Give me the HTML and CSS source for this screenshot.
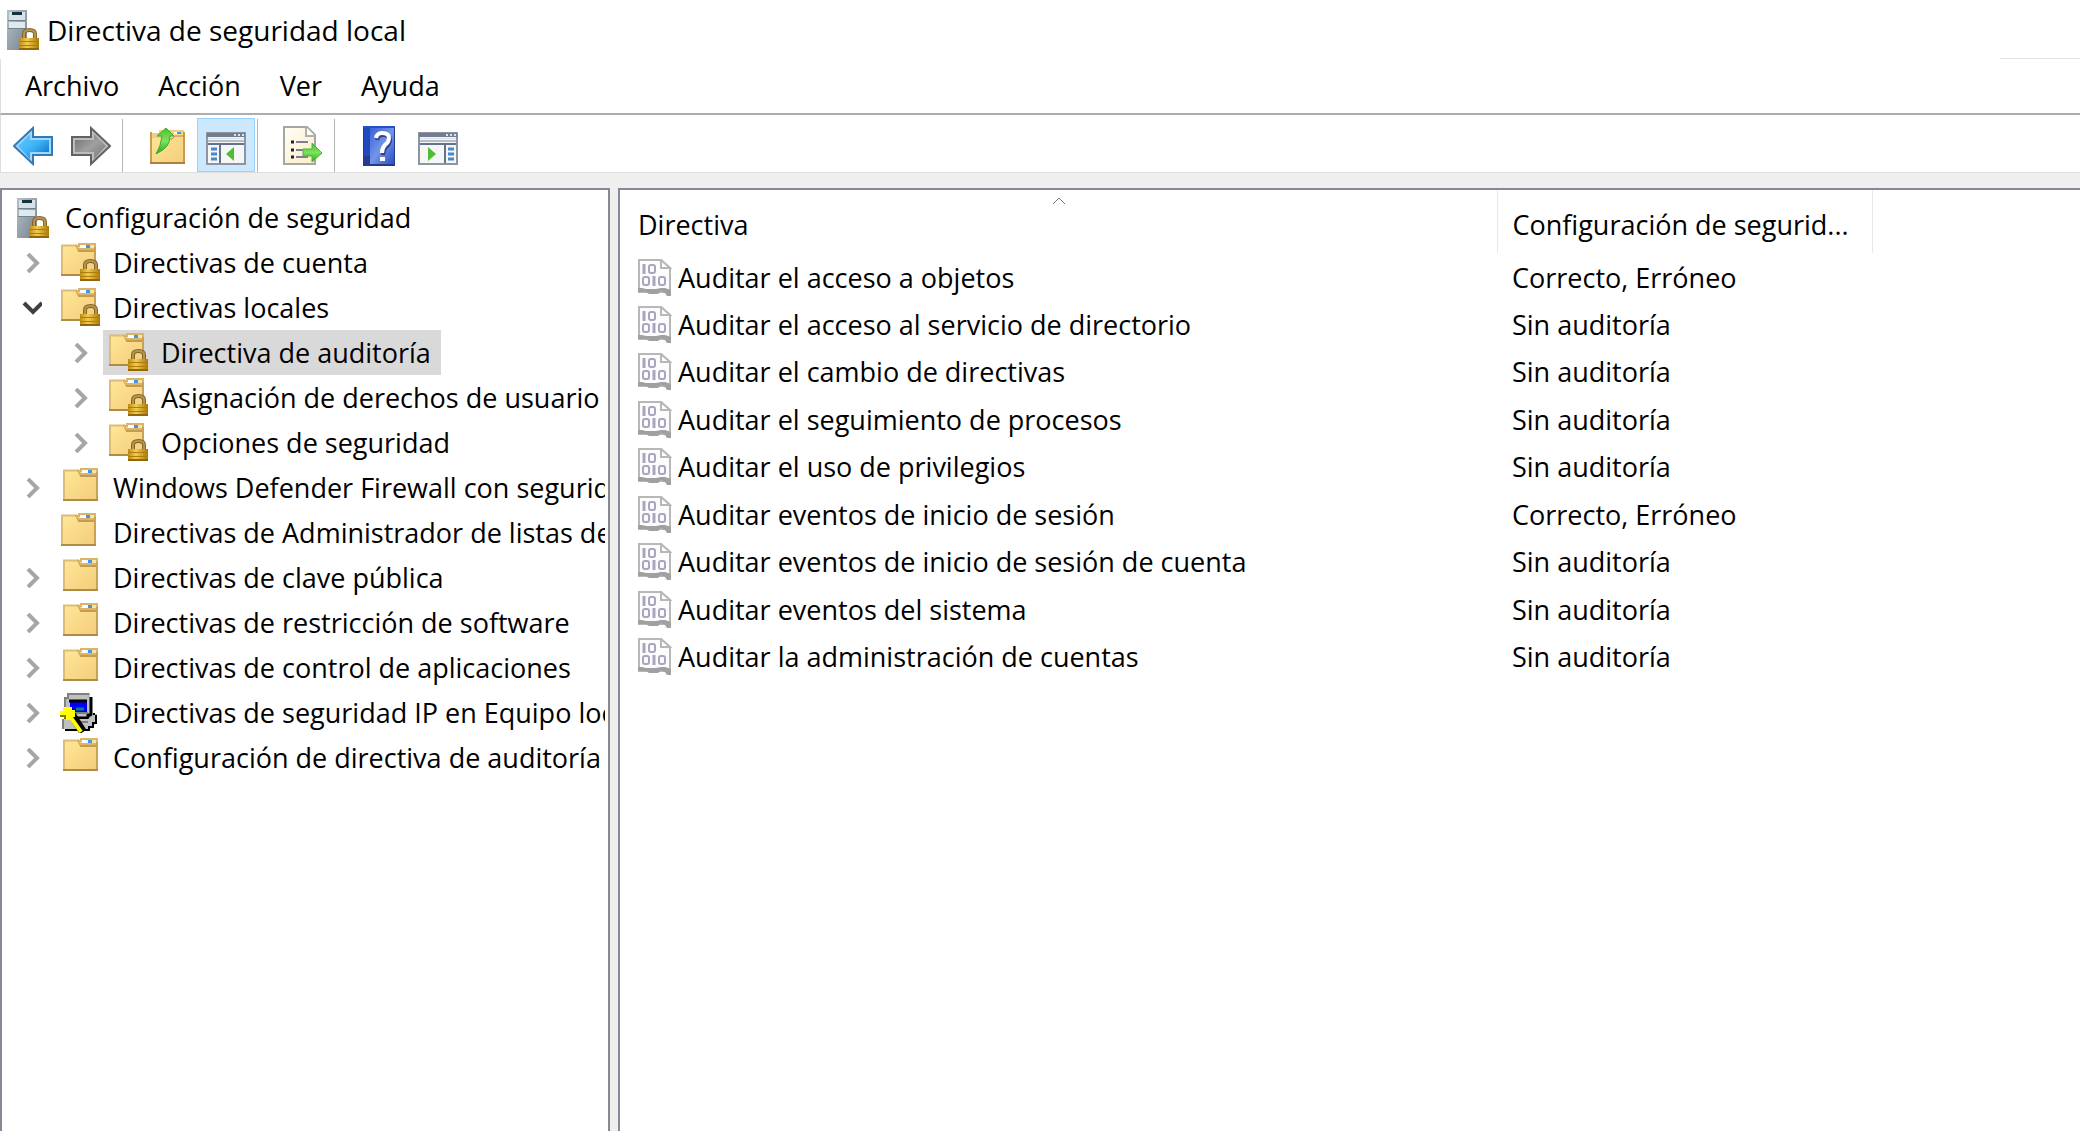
FILE: index.html
```html
<!DOCTYPE html>
<html lang="es">
<head>
<meta charset="utf-8">
<title>Directiva de seguridad local</title>
<link rel="stylesheet" href="styles.css">
</head>
<body>
<svg class="defs" aria-hidden="true">
  <defs>
    <linearGradient id="gFolder" x1="0" y1="0" x2="1" y2="1"><stop offset="0" stop-color="#ffe797"/><stop offset="1" stop-color="#f3cc7b"/></linearGradient>
    <linearGradient id="gServer" x1="0" y1="0" x2="1" y2="1"><stop offset="0" stop-color="#b5c2c9"/><stop offset="1" stop-color="#76828f"/></linearGradient>
    <linearGradient id="gLock" x1="0" y1="0" x2="1" y2="0"><stop offset="0" stop-color="#c08a12"/><stop offset=".4" stop-color="#f0cc50"/><stop offset="1" stop-color="#ac7806"/></linearGradient>
    <linearGradient id="gBlue" x1="0" y1="0" x2="1" y2="1"><stop offset="0" stop-color="#69c9ff"/><stop offset=".5" stop-color="#3db2f8"/><stop offset="1" stop-color="#0569c0"/></linearGradient>
    <linearGradient id="gGray" x1="0" y1="0" x2="1" y2="1"><stop offset="0" stop-color="#6d6d6d"/><stop offset=".5" stop-color="#a0a0a0"/><stop offset="1" stop-color="#777"/></linearGradient>
    <linearGradient id="gHelp" x1="0" y1="0" x2="1" y2="1"><stop offset="0" stop-color="#3b62d8"/><stop offset=".5" stop-color="#7394e8"/><stop offset="1" stop-color="#2c4fc0"/></linearGradient>
    <linearGradient id="gPage" x1="0" y1="0" x2="1" y2="1"><stop offset="0" stop-color="#fffef8"/><stop offset="1" stop-color="#faecc4"/></linearGradient>
    <linearGradient id="gGreen" x1="0" y1="0" x2="0" y2="1"><stop offset="0" stop-color="#47c12c"/><stop offset=".5" stop-color="#7be45c"/><stop offset="1" stop-color="#2fa41c"/></linearGradient>
  </defs>
  <symbol id="lock" viewBox="0 0 21 23">
    <path d="M5 12V7q0-4 5.500-4T16 7v5" fill="none" stroke="#80642c" stroke-width="4"/>
    <path d="M5 11V7q0-4 5.500-4T16 7v4" fill="none" stroke="#b9924b" stroke-width="2"/>
    <rect x="0" y="11" width="20" height="12" fill="url(#gLock)"/>
    <path d="M0 14.500h20M0 18.500h20" stroke="#b07d0a"/>
    <path d="M0 22h20" stroke="#94660a" stroke-width="2"/>
  </symbol>
  <symbol id="folder" viewBox="0 0 40 40">
    <path d="M2 3h15l3 5h15v24H2z" fill="url(#gFolder)"/>
    <path d="M2 32V2.500h15" fill="none" stroke="#dbbc78" stroke-width="2"/>
    <path d="M16 2l3 6h17" fill="none" stroke="#c49b50" stroke-width="2"/>
    <path d="M17 5V3h2V1h16v5H19z" fill="#fbe3a4" stroke="#dcb468" stroke-width="2"/>
    <path d="M35 4v28" stroke="#c9a258" stroke-width="2"/>
    <path d="M1 32h35" stroke="#b08b46" stroke-width="2"/>
    <path d="M20 3.500h6" stroke="#fff" stroke-width="3"/><path d="M26 3.500h4" stroke="#3d96ea" stroke-width="3"/>
  </symbol>
  <symbol id="folder-lock" viewBox="0 0 40 40">
    <use href="#folder" width="40" height="40"/>
    <use href="#lock" x="20" y="15" width="21" height="23"/>
  </symbol>
  <symbol id="server-lock" viewBox="0 0 34 40">
    <rect width="20" height="40" fill="url(#gServer)"/>
    <rect x="2" y="2" width="16" height="8" fill="#d5e2e7"/><rect x="2" y="12" width="16" height="6" fill="#e0eaee"/>
    <rect x="5" y="2" width="10" height="3" fill="#15333c"/>
    <path d="M1 10.500h18M1 18.500h18" stroke="#73838d"/>
    <use href="#lock" x="12" y="17" width="21" height="23"/>
  </symbol>
  <symbol id="page" viewBox="0 0 34 38">
    <path d="M1 1h22l9 8v22l-3 2H1z" fill="#fcfcfc" stroke="#b8b8b8" stroke-width="2"/>
    <path d="M23 1v8h9z" fill="#fff" stroke="#b8b8b8" stroke-width="2"/>
    <path d="M0 29h4l4 1h10l5-1h4l6 2v6h-4l-2-3-4-2-3 3h-9l-3-2H0z" fill="#a0a0a0"/>
    <path d="M6 5v10M16 17v10" stroke="#a9a5c0" stroke-width="3"/>
    <g fill="none" stroke="#a9a5c0" stroke-width="2">
      <rect x="11" y="6" width="6" height="8" rx="2"/>
      <rect x="5" y="18" width="6" height="8" rx="2"/>
      <rect x="21" y="18" width="6" height="8" rx="2"/>
    </g>
  </symbol>
  <symbol id="chev" viewBox="0 0 20 20"><path d="M6 1l9 9-9 9" fill="none" stroke="#a6a6a6" stroke-width="4"/></symbol>
  <symbol id="chev-open" viewBox="0 0 20 20"><path d="M2 5l9 9 9-9" fill="none" stroke="#404040" stroke-width="4"/></symbol>
  <symbol id="ip" viewBox="0 0 40 40">
    <path d="M4 4h4V0h22v4h2v18l-4 4H5z" fill="#c0c0c0"/>
    <path d="M5 22V5h3V1h21" fill="none" stroke="#808080" stroke-width="2"/>
    <path d="M31 4v18h-3v3H12" fill="none" stroke="#000" stroke-width="3"/>
    <path d="M10 8h17v11H10z" fill="#0000f2"/>
    <path d="M9 8h18" stroke="#000" stroke-width="3"/><path d="M9 20h19" stroke="#808080" stroke-width="2"/>
    <path d="M16 16h8" stroke="#008286" stroke-width="3"/>
    <path d="M2 26h26l6-5h3v9l-7 6H3z" fill="#c0c0c0"/>
    <path d="M3 26v10M14 29h14" stroke="#808080" stroke-width="2"/>
    <path d="M34 22v-2M5 37h24v-3h4v-4h3v-8" fill="none" stroke="#000" stroke-width="2"/>
    <path d="M12 22l11 17" stroke="#000" stroke-width="8"/>
    <path d="M9 22l12 17" stroke="#ff0" stroke-width="4"/>
    <path d="M3 14h9v3h3v7h-4v3H6v-4H0v-5h3z" fill="#ff0"/>
    <path d="M0 23h5v3" fill="none" stroke="#808000" stroke-width="2"/>
  </symbol>
</svg>

<div class="window">
  <header class="titlebar">
    <svg class="server"><use href="#server-lock"/></svg>
    <h1>Directiva de seguridad local</h1>
  </header>
  <nav class="menubar" aria-label="Menú">
    <button type="button">Archivo</button>
    <button type="button">Acción</button>
    <button type="button">Ver</button>
    <button type="button">Ayuda</button>
  </nav>
  <div class="toolbar" role="toolbar" aria-label="Herramientas">
    <button type="button" aria-label="Atrás"><svg viewBox="0 0 40 40"><path d="M1 20L20 2v9h19v18H20v9z" fill="#9ed9fb" stroke="#3379b5" stroke-width="2"/><path d="M5 20L17 8v6h19v12H17v7z" fill="url(#gBlue)"/></svg></button>
    <button type="button" aria-label="Adelante"><svg viewBox="0 0 40 40"><path d="M39 20L20 2v9H1v18h19v9z" fill="#bdbdbd" stroke="#626262" stroke-width="2"/><path d="M35 20L23 8v6H4v12h19v7z" fill="url(#gGray)"/></svg></button>
    <span class="sep"></span>
    <button type="button" aria-label="Subir un nivel"><svg viewBox="0 0 40 40"><path d="M3 7h8V4h25v34H3z" fill="#f0d080"/><path d="M3 12h17l3-4h13v30H3z" fill="url(#gFolder)"/><path d="M3 37V6M36 6v32" stroke="#c59e52" stroke-width="2"/><path d="M2 37h35" stroke="#aa823c" stroke-width="2"/><path d="M20 13h4l3-3h9" fill="none" stroke="#b58a42"/><path d="M26 7h4" stroke="#fff" stroke-width="2"/><path d="M29 7h4" stroke="#3c96ec" stroke-width="2"/><path d="M18 2l8 8h-4q0 6-3 10t-11 8q5-8 6-18h-5z" fill="url(#gGreen)" stroke="#46a634"/></svg></button>
    <button type="button" class="on" aria-pressed="true" aria-label="Mostrar u ocultar el árbol de consola"><svg viewBox="0 0 40 40"><rect x="1" y="7" width="38" height="31" fill="#f5f7f7" stroke="#8e959e" stroke-width="2"/><path d="M1 9h38" stroke="#727c90" stroke-width="4"/><path d="M2 12.500h36" stroke="#dce2ec"/><path d="M2 15h36" stroke="#b8bec8" stroke-width="2"/><path d="M2 18h36M14 18v19" stroke="#65718a" stroke-width="2"/><path d="M28 9h2m2 0h2m2 0h2" stroke="#dfe5ef" stroke-width="2"/><path d="M5 23h6M5 28h6M5 33h6" stroke="#4888cc" stroke-width="3"/><path d="M28 21v14l-8-7z" fill="#50bd31"/></svg></button>
    <span class="sep"></span>
    <button type="button" aria-label="Exportar lista"><svg viewBox="0 0 40 40"><path d="M1 1h23l8 8v29H1z" fill="url(#gPage)" stroke="#a6a6a3" stroke-width="2"/><path d="M23 1v9h9" fill="#fff" stroke="#b0b0b0" stroke-width="2"/><path d="M8 16h3M8 24h3M8 31h3" stroke="#222" stroke-width="3"/><path d="M13 16h12M13 24h12M13 31h12" stroke="#817a98" stroke-width="2"/><path d="M20 23h9v-6l10 10-10 9v-6h-9z" fill="url(#gGreen)" stroke="#48b833"/></svg></button>
    <span class="sep"></span>
    <button type="button" aria-label="Ayuda"><svg viewBox="0 0 40 40"><path d="M3 0h32v40H3z" fill="#253b91"/><path d="M3 0h32v2H3z" fill="#2352c4"/><path d="M10 2h24v36H10z" fill="url(#gHelp)"/><path d="M4 2h6v28H4z" fill="#2148bd"/><path d="M17 14q1-5 6-5 7 0 7 5 0 4-4 7-3 3-3 8" fill="none" stroke="#2c428e" stroke-width="4"/><path d="M16 12q1-5 6-5 7 0 7 5 0 4-4 7-3 3-3 8M20 33h5" fill="none" stroke="#fff" stroke-width="4"/></svg></button>
    <button type="button" aria-label="Mostrar u ocultar el panel de acciones"><svg viewBox="0 0 40 40"><rect x="1" y="7" width="38" height="31" fill="#f5f7f7" stroke="#8e959e" stroke-width="2"/><path d="M1 9h38" stroke="#727c90" stroke-width="4"/><path d="M2 12.500h36" stroke="#dce2ec"/><path d="M2 15h36" stroke="#b8bec8" stroke-width="2"/><path d="M2 18h36M27 18v19" stroke="#65718a" stroke-width="2"/><path d="M28 9h2m2 0h2m2 0h2" stroke="#dfe5ef" stroke-width="2"/><path d="M30 23h6M30 28h6M30 33h6" stroke="#4888cc" stroke-width="3"/><path d="M10 21v14l8-7z" fill="#50bd31"/></svg></button>
  </div>
  <main class="panes">
    <section class="tree" aria-label="Árbol de consola">
      <ul>
        <li class="root"><svg class="server"><use href="#server-lock"/></svg><span class="label">Configuración de seguridad</span></li>
        <li><svg class="chev"><use href="#chev"/></svg><svg class="icon"><use href="#folder-lock"/></svg><span class="label">Directivas de cuenta</span></li>
        <li><svg class="chev"><use href="#chev-open"/></svg><svg class="icon"><use href="#folder-lock"/></svg><span class="label">Directivas locales</span></li>
        <li class="sub"><svg class="chev"><use href="#chev"/></svg><span class="selected"><svg class="icon"><use href="#folder-lock"/></svg><span class="label">Directiva de auditoría</span></span></li>
        <li class="sub"><svg class="chev"><use href="#chev"/></svg><svg class="icon"><use href="#folder-lock"/></svg><span class="label">Asignación de derechos de usuario</span></li>
        <li class="sub"><svg class="chev"><use href="#chev"/></svg><svg class="icon"><use href="#folder-lock"/></svg><span class="label">Opciones de seguridad</span></li>
        <li><svg class="chev"><use href="#chev"/></svg><svg class="icon plain"><use href="#folder"/></svg><span class="label">Windows Defender Firewall con seguridad</span></li>
        <li><svg class="chev"></svg><svg class="icon"><use href="#folder"/></svg><span class="label">Directivas de Administrador de listas de</span></li>
        <li><svg class="chev"><use href="#chev"/></svg><svg class="icon plain"><use href="#folder"/></svg><span class="label">Directivas de clave pública</span></li>
        <li><svg class="chev"><use href="#chev"/></svg><svg class="icon plain"><use href="#folder"/></svg><span class="label">Directivas de restricción de software</span></li>
        <li><svg class="chev"><use href="#chev"/></svg><svg class="icon plain"><use href="#folder"/></svg><span class="label">Directivas de control de aplicaciones</span></li>
        <li><svg class="chev"><use href="#chev"/></svg><svg class="icon"><use href="#ip"/></svg><span class="label">Directivas de seguridad IP en Equipo local</span></li>
        <li><svg class="chev"><use href="#chev"/></svg><svg class="icon plain"><use href="#folder"/></svg><span class="label">Configuración de directiva de auditoría</span></li>
      </ul>
    </section>
    <section class="list" aria-label="Directivas">
      <table>
        <colgroup><col class="c-name"><col class="c-conf"><col></colgroup>
        <thead>
          <tr><th scope="col" aria-sort="ascending">Directiva<svg class="sort" viewBox="0 0 14 8"><path d="M1 7l6-6 6 6" fill="none" stroke="#7a7a7a"/></svg></th><th scope="col">Configuración de segurid...</th><td></td></tr>
        </thead>
        <tbody>
          <tr><td><span class="cell"><svg class="page"><use href="#page"/></svg>Auditar el acceso a objetos</span></td><td>Correcto, Erróneo</td><td></td></tr>
          <tr><td><span class="cell"><svg class="page"><use href="#page"/></svg>Auditar el acceso al servicio de directorio</span></td><td>Sin auditoría</td><td></td></tr>
          <tr><td><span class="cell"><svg class="page"><use href="#page"/></svg>Auditar el cambio de directivas</span></td><td>Sin auditoría</td><td></td></tr>
          <tr><td><span class="cell"><svg class="page"><use href="#page"/></svg>Auditar el seguimiento de procesos</span></td><td>Sin auditoría</td><td></td></tr>
          <tr><td><span class="cell"><svg class="page"><use href="#page"/></svg>Auditar el uso de privilegios</span></td><td>Sin auditoría</td><td></td></tr>
          <tr><td><span class="cell"><svg class="page"><use href="#page"/></svg>Auditar eventos de inicio de sesión</span></td><td>Correcto, Erróneo</td><td></td></tr>
          <tr><td><span class="cell"><svg class="page"><use href="#page"/></svg>Auditar eventos de inicio de sesión de cuenta</span></td><td>Sin auditoría</td><td></td></tr>
          <tr><td><span class="cell"><svg class="page"><use href="#page"/></svg>Auditar eventos del sistema</span></td><td>Sin auditoría</td><td></td></tr>
          <tr><td><span class="cell"><svg class="page"><use href="#page"/></svg>Auditar la administración de cuentas</span></td><td>Sin auditoría</td><td></td></tr>
        </tbody>
      </table>
    </section>
  </main>
</div>
</body>
</html>
```

FILE: styles.css
```css
* { box-sizing: border-box; }
body {
  margin: 0;
  background: #fff;
  color: #000;
  font: 27px/44px "Segoe UI", "Open Sans", "Noto Sans", sans-serif;
}
svg { display: block; flex: none; }
.defs { position: absolute; width: 0; height: 0; }
button { font: inherit; color: inherit; border: 0; background: none; padding: 0; }
ul { list-style: none; margin: 0; padding: 0; }

.window { display: flex; flex-direction: column; min-height: 100vh; }
.server { width: 34px; height: 40px; }

.titlebar {
  display: flex;
  align-items: center;
  gap: 6px;
  height: 59px;
  padding-left: 7px;
  background: linear-gradient(#e3e3e3, #e3e3e3) right bottom / 80px 1px no-repeat;
}
.titlebar h1 { margin: 0; font: inherit; font-size: 28px; }

.menubar {
  display: flex;
  align-items: center;
  gap: 39px;
  height: 56px;
  padding-left: 24px;
  border-left: 1px solid #dedede;
  border-bottom: 2px solid #adadad;
}
.toolbar {
  display: flex;
  align-items: stretch;
  height: 58px;
  padding: 3px 0 0 3px;
  border-left: 1px solid #dedede;
  border-bottom: 1px solid #dedede;
}
.toolbar button {
  display: grid;
  place-items: center;
  width: 58px;
  padding-top: 2px;
  border: 1px solid transparent;
}
.toolbar button svg { width: 40px; height: 40px; }
.toolbar .on { background: #cce8ff; border-color: #99d1ff; }
.sep { width: 1px; margin: 1px 16px 0 2px; background: #b4b4b4; }

.panes {
  flex: 1;
  display: grid;
  grid-template-columns: 610px 1fr;
  gap: 8px;
  padding-top: 15px;
  background: #efefef;
}
.tree, .list { background: #fff; border: 2px solid #858993; border-bottom: 0; min-width: 0; overflow: hidden; }
.list { border-right: 0; }

.tree { padding: 5px 3px 0 0; }
.tree ul { overflow: hidden; }
.tree li {
  display: flex;
  align-items: center;
  height: 45px;
  padding-left: 20px;
  white-space: nowrap;
}
.tree li.root { padding-left: 15px; gap: 14px; }
.tree li.sub { padding-left: 68px; }
.chev { width: 20px; height: 20px; margin-right: 18px; }
.icon { width: 40px; height: 40px; }
.icon.plain { margin-left: 2px; margin-right: -2px; }
.icon + .label { margin-left: 13px; }
.selected {
  display: flex;
  align-items: center;
  height: 45px;
  margin-left: -5px;
  padding: 0 10px 0 5px;
  background: #d9d9d9;
}

table { width: 100%; table-layout: fixed; border-collapse: collapse; }
.c-name { width: 877px; }
.c-conf { width: 375px; }
th, td { padding: 0 0 0 15px; text-align: left; font-weight: 400; white-space: nowrap; }
th:first-child, td:first-child { padding-left: 18px; }
th { position: relative; height: 63px; padding-top: 6px; border-right: 1px solid #e9e9e9; }
.sort { position: absolute; top: 7px; left: calc(50% - 6px); width: 14px; height: 8px; }
tbody tr:first-child td { padding-top: 2px; }
tbody td { height: 48px; }
tbody tr:nth-child(even) td { height: 47px; }
.cell { display: flex; align-items: center; gap: 6px; }
.page { width: 34px; height: 38px; }
```
